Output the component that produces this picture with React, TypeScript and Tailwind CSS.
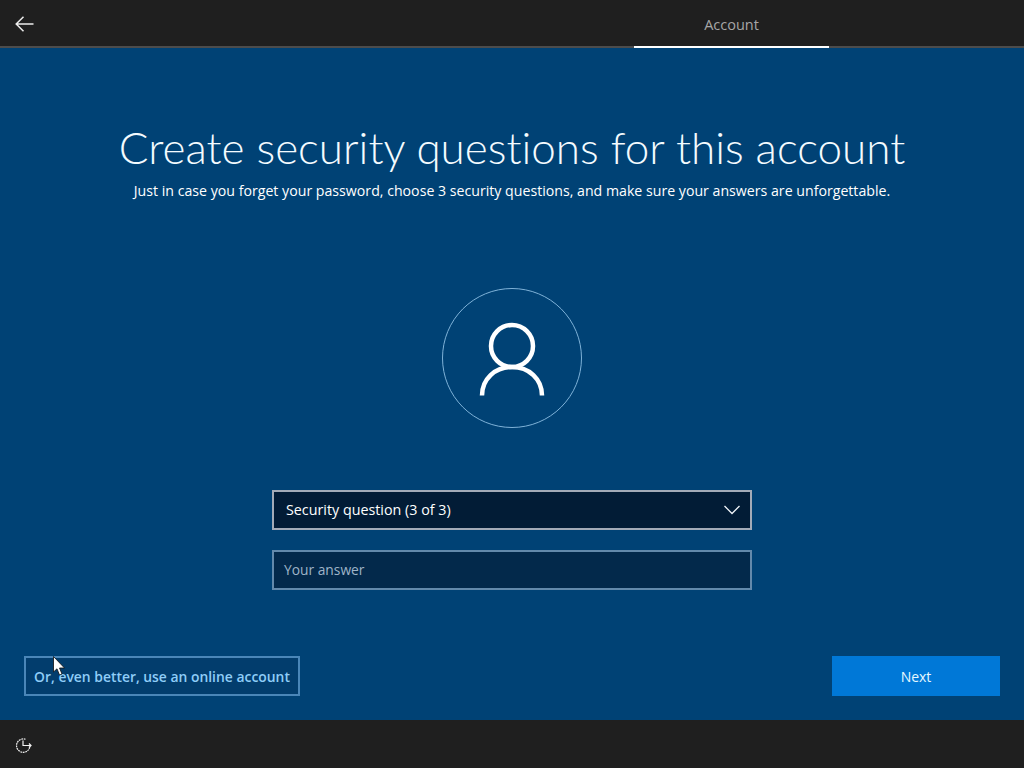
import React from 'react';

export default function App() {
  return (
    <div className="w-[1024px] h-[768px] flex flex-col overflow-hidden bg-[#004275] text-white font-['Open_Sans',sans-serif]">
      {/* Top bar */}
      <div className="h-12 shrink-0 flex items-stretch bg-[#1f1f1f] border-b-2 border-[#4c4c4c]">
        <div className="w-[634px] pt-[2px] flex items-center pl-[15px]">
          <svg width="19" height="16" viewBox="0 0 19 16" fill="none" stroke="#ececec" strokeWidth="1.500">
            <path d="M8.500 0.700 L1.200 8 L8.500 15.300 M1.200 8 H18.500" />
          </svg>
        </div>
        <div className="w-[195px] -mb-[2px] pt-[3px] flex items-center justify-center border-b-2 border-white text-[14.500px] text-[#a6a6a6]">
          Account
        </div>
      </div>

      {/* Main */}
      <div className="relative flex-1 flex flex-col items-center pt-[70px]">
        <h1 className="h-[60px] leading-[58px] text-[44px] font-light whitespace-nowrap text-[#f4fbff] font-['Lato',sans-serif] [font-variant-ligatures:none]">
          Create security questions for this account
        </h1>
        <p className="h-[24px] leading-[26px] text-[14.160px] whitespace-nowrap">
          Just in case you forget your password, choose 3 security questions, and make sure your answers are unforgettable.
        </p>

        <div className="mt-[86px] w-[140px] h-[140px] rounded-full border border-[#7fb2d8] flex items-center justify-center">
          <svg className="mt-[3px]" width="66" height="76" viewBox="0 0 66 76" fill="none" stroke="#ffffff" strokeWidth="4.500">
            <circle cx="33" cy="24" r="21" />
            <path d="M3 73.500 C3 57 16 45 33 45 C50 45 63 57 63 73.500" />
          </svg>
        </div>

        <div className="mt-[62px] w-[480px] h-10 flex items-center justify-between pl-3 pr-[10px] border-2 border-[#a3abb8] bg-[#021c36] text-[14.300px]">
          <span>Security question (3 of 3)</span>
          <svg width="16" height="10" viewBox="0 0 16 10" fill="none" stroke="#f0f4f8" strokeWidth="1.300">
            <path d="M0.500 1 L8 8.500 L15.500 1" />
          </svg>
        </div>

        <div className="mt-5 w-[480px] h-10 flex items-center pl-[10px] border-2 border-[#6389ab] bg-[#03294b] text-[13.800px] text-[#9fb4c8]">
          Your answer
        </div>

        <div className="mt-[66px] w-full flex items-start justify-between pl-6 pr-6">
          <div className="w-[276px] h-10 pt-[2px] flex items-center justify-center border-2 border-[#4a86b8] bg-[#023d6d] text-[13.900px] font-semibold text-[#8fcdf8] whitespace-nowrap">
            Or, even better, use an online account
          </div>
          <div className="w-[168px] h-10 pt-[1px] flex items-center justify-center bg-[#0078d7] text-[14px] font-medium text-[#e6f8ff]">
            Next
          </div>
        </div>

        {/* Mouse pointer */}
        <svg className="absolute left-[53px] top-[608px]" width="13" height="21" viewBox="0 0 13 21">
          <path d="M0.500 0.500 L0.500 16 L4 12.800 L6.500 19 L9 18 L6.500 12 L11.500 12 Z" fill="#ffffff" stroke="#101010" strokeWidth="0.800" />
        </svg>
      </div>

      {/* Bottom bar */}
      <div className="h-12 shrink-0 flex items-center pl-[15px] pt-[2px] bg-[#1f1f1f]">
        <svg width="17" height="17" viewBox="0 0 17 17" fill="none" stroke="#f2f2f2" strokeWidth="1.200">
          <path d="M10.500 2.300 A6.700 6.700 0 1 0 14.800 10" strokeDasharray="1.800 0.700" />
          <path d="M8 3.500 V8.500 H16 M14 6.500 L16 8.500 L14 10.500" />
        </svg>
      </div>
    </div>
  );
}
